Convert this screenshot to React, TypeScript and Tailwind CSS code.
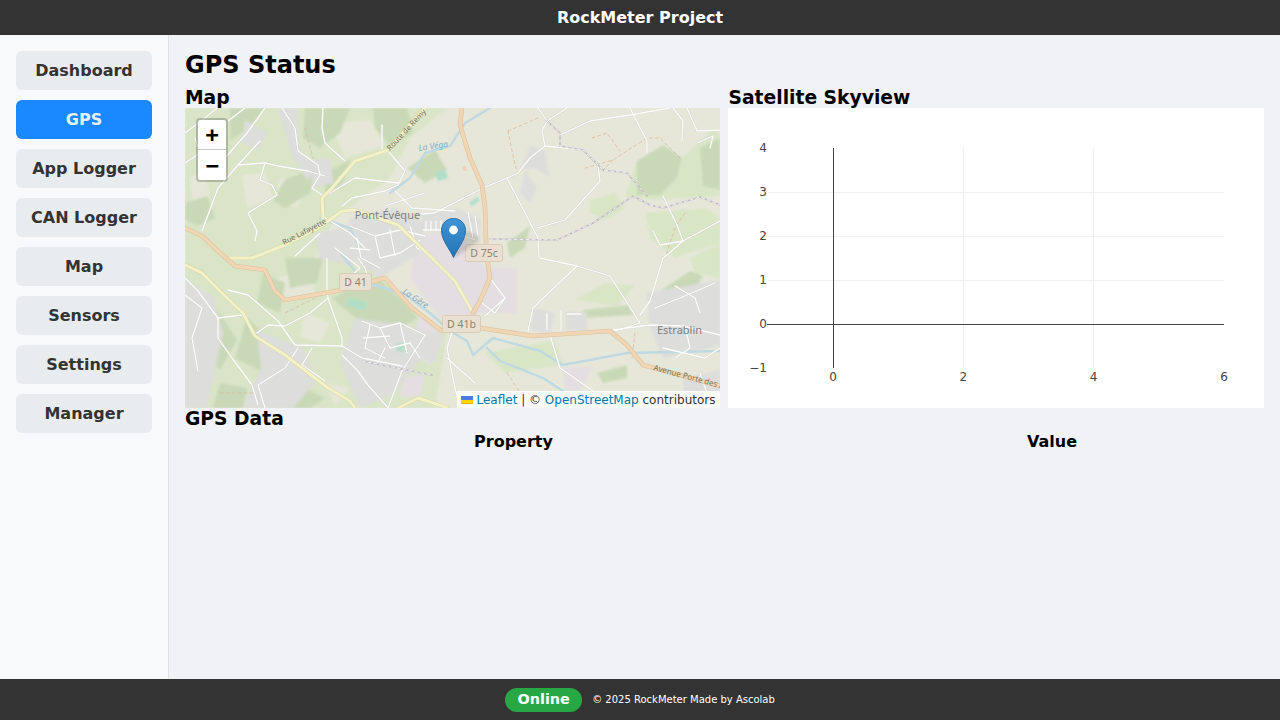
const navItems = ["Dashboard", "GPS", "App Logger", "CAN Logger", "Map", "Sensors", "Settings", "Manager"];

const font = "font-['DejaVu_Sans',sans-serif]";

// map artwork, coordinates relative to the 535x300 tile area
const greenBase = "M0 0L262 0L225 30L205 70L150 110L130 150L190 160L235 205L262 225L250 300L0 300Z";

const forest = [
  "M452 53L478 37L497 50L492 70L475 87L452 87Z",
  "M475 183L505 163L518 168L505 190L492 200Z",
  "M398 202L445 197L448 207L398 210Z",
  "M147 190L170 178L193 170L215 190L233 210L210 222L190 224L167 207Z",
  "M120 0L165 0L155 25L135 40L118 30Z",
  "M45 0L80 0L65 20L45 32Z",
  "M188 0L222 0L228 25L205 38L190 20Z",
  "M222 60L250 42L262 62L240 75Z",
  "M100 72L130 60L125 85L100 100L88 92Z",
  "M0 95L22 88L30 110L12 118L0 112Z",
  "M140 65L165 52L158 75L140 88Z",
  "M0 178L28 195L52 232L35 262L12 240L0 215Z",
  "M62 210L95 240L80 265L50 250Z",
  "M78 165L100 175L95 205L72 195Z",
  "M110 275L140 290L125 300L95 300Z",
  "M35 275L62 280L58 300L28 300Z",
  "M412 265L442 257L442 270L418 275Z",
  "M515 40L535 30L535 82L518 78Z",
  "M322 135L345 118L340 140L325 150Z",
  "M100 150L138 150L132 175L105 180Z",
];

const meadow = [
  "M497 50L530 20L535 30L535 88L470 92L440 88L452 53L475 87L492 70Z",
  "M405 92L430 85L440 100L420 112L405 105Z",
  "M460 105L520 100L535 110L535 135L490 150L465 130Z",
  "M390 192L420 175L450 178L432 198Z",
  "M300 245L370 232L378 257L320 265Z",
  "M505 150L535 135L535 170L510 165Z",
];

const fields = [
  "M57 67L80 65L88 90L62 100Z",
  "M145 15L185 12L200 38L160 50Z",
  "M5 70L20 62L25 90L8 95Z",
  "M95 70L125 75L112 100L92 92Z",
  "M92 170L125 160L130 185L100 195Z",
  "M120 205L145 215L135 235L115 228Z",
  "M140 275L165 280L150 298Z",
];

const urban = [
  "M165 110L210 100L240 115L235 145L195 170L160 145Z",
  "M130 125L172 118L168 158L134 150Z",
  "M0 172L28 188L38 225L22 300L0 300Z",
  "M72 222L118 240L132 272L108 300L58 300L76 260Z",
  "M170 210L225 218L240 245L210 285L175 300L155 255Z",
  "M92 0L112 0L115 42L135 62L122 72L108 50Z",
  "M60 12L82 25L74 42L56 35Z",
  "M125 52L145 50L148 75L128 80Z",
  "M345 38L360 42L365 70L350 60L335 62Z",
  "M350 200L370 205L365 225L345 222Z",
  "M381 204L402 204L402 222L381 222Z",
  "M462 185L535 172L535 238L478 250L465 220Z",
  "M498 270L535 262L535 300L500 300Z",
  "M230 218L258 228L250 255L228 245Z",
  "M340 62L352 80L345 95L335 85Z",
  "M236 106L272 100L296 112L295 128L262 126L238 122Z",
];

const plaza = [
  "M232 126L275 125L300 160L332 160L332 205L292 205L285 220L255 210L225 170Z",
  "M235 205L255 225L245 258L225 240Z",
  "M378 260L408 258L395 283L380 283Z",
  "M220 270L240 265L235 290L215 288Z",
];

const roads = [
  "M97 0L110 20L113 43L133 57L135 67L127 80L137 87",
  "M93 58L123 63L140 68",
  "M53 57L80 55L93 58",
  "M75 33L53 57L33 80L17 123",
  "M43 13L60 0",
  "M80 55L75 72L87 77L92 87L63 105L72 123L70 133",
  "M138 0L137 20L140 35L160 53",
  "M197 17L197 42",
  "M137 90L170 70L213 75",
  "M203 43L220 63L213 77L200 83L167 90L157 98",
  "M210 83L227 100L270 103",
  "M0 25L20 10L32 0",
  "M0 55L15 45L10 30",
  "M142 150L142 183L143 190L125 205L100 218L83 217L72 225",
  "M143 190L157 230L157 238",
  "M43 182L63 187L93 213L110 237L157 238L177 250L217 258",
  "M0 170L13 183L33 210L33 230L47 250L67 277L73 297",
  "M33 210L57 207",
  "M0 187L17 200L7 230L13 263",
  "M113 240L100 260L73 277L80 300",
  "M127 240L117 257L140 273",
  "M157 247L173 263L183 277L203 300",
  "M173 150L180 160L183 170",
  "M240 227L217 263L203 300",
  "M80 0L62 25L40 50",
  "M140 110L165 125L180 140",
  "M135 125L110 148",
  "M150 140L175 160L162 172",
  // town grid round Pont-Eveque
  "M165 118L190 128L215 122L240 128",
  "M172 130L176 150L195 160",
  "M190 128L195 150L215 145L235 132",
  "M205 122L210 148",
  "M225 118L232 140L250 150",
  "M165 140L185 142",
  "M200 98L240 85",
  // comb of streets beside the marker
  "M238 122L262 122L290 132",
  "M241 113L241 122M246 113L246 122M251 113L251 122M256 113L256 122",
  "M283 104L288 130M290 108L293 128",
  // southern town
  "M177 213L195 220L215 215L240 227",
  "M185 217L180 240L200 250",
  "M195 220L205 240L225 235",
  "M215 215L222 245",
  "M178 230L205 228",
  "M200 240L192 256",
  "M225 235L235 250",
  // plaza roads
  "M265 97L298 80L322 70L333 65L345 50L360 38L357 23L362 13L353 0",
  "M382 0L362 13",
  "M322 70L353 130L354 150",
  "M360 38L398 42L413 57L415 73L380 112L352 120",
  "M375 27L405 13L445 7L485 0",
  "M445 0L462 33L462 45",
  "M488 0L498 13L497 33",
  "M502 0L512 23L535 22",
  "M512 35L528 28L525 40",
  "M478 88L492 117L498 133L482 147L478 150L465 193L455 207",
  "M468 123L475 137L498 133L535 113",
  "M355 150L392 158L425 168L455 215L430 223",
  "M392 158L355 193L348 200L343 223",
  "M428 222L465 217L498 218L535 227",
  "M365 227L375 260L408 283",
  "M265 97L250 105L236 106",
  "M305 170L320 190L310 205L297 195",
  "M300 208L320 190",
  "M362 205L362 222M376 202L376 222M382 206L396 206",
  "M490 178L510 190L515 205",
  "M470 200L495 190L530 175",
  "M500 218L505 240L490 250",
  "M478 240L520 250L535 240",
  "M515 265L522 285L512 300",
  "M270 215L262 240L270 280L275 300",
  "M262 250L290 275",
];

const yellowRoads = [
  "M0 157L17 165L40 188L58 205L70 228L100 247L117 260L143 280L165 293L170 300",
  "M240 0L203 42L170 53L147 80L137 90L138 110",
  "M40 150L67 150L100 137L133 120L157 103L170 102L213 117L247 150L270 173L288 205",
  "M213 300L233 290L257 298L262 300",
];

const orangeRoads = [
  "M277 0L275 17L285 50L297 77L300 100L301 133L302 150L305 170L295 193L288 205",
  "M295 220L348 228L425 223L442 237L458 257L535 278",
  "M0 120L17 128L33 143L50 158L80 162L90 183L100 192L157 182L200 170L227 200L257 223L270 222",
];

const rivers = [
  "M205 85L225 70L240 45L265 38L280 15L305 0",
  "M218 185L245 205L265 223L282 233L288 247L308 230L355 243L378 257L442 245L535 243",
  "M302 240L315 253L358 270L378 283",
  "M135 110L165 120L175 140",
  "M155 145L180 175L218 185",
];

const railway = "M305 131L372 132L408 115L448 88L465 97L478 100L515 89L535 97";
const railway2 = "M362 13L375 25L375 38L398 42L418 62L442 65L462 88";
const railway3 = "M177 253L247 267";
const paths = [
  "M323 23L353 10",
  "M323 23L330 57L333 65",
  "M400 60L428 52L462 30L475 30L495 50",
  "M407 30L422 25L435 43",
  "M428 52L418 62",
  "M450 225L447 250",
  "M500 105L490 120L480 150",
  "M130 190L100 205",
  "M35 285L70 285",
  "M322 265L345 300",
  "M120 20L128 50",
];

function MapArt() {
  return (
    <svg viewBox="0 0 535 300" className="block w-full h-full">
      <defs>
        <filter id="area" x="-5%" y="-5%" width="110%" height="110%">
          <feGaussianBlur stdDeviation="1.1" />
        </filter>
        <filter id="soft" x="-5%" y="-5%" width="110%" height="110%">
          <feGaussianBlur stdDeviation="0.35" />
        </filter>
        <filter id="shade" x="-30%" y="-30%" width="160%" height="160%">
          <feGaussianBlur stdDeviation="1.4" />
        </filter>
        <linearGradient id="pin" x1="0" y1="0" x2="0" y2="1">
          <stop offset="0" stopColor="#3f95d6" />
          <stop offset="1" stopColor="#2473b4" />
        </linearGradient>
      </defs>
      <rect width="535" height="300" fill="#e6e7d9" />
      <g filter="url(#area)">
        <path d={greenBase} fill="#d9e5c6" />
        {meadow.map((d) => <path key={d} d={d} fill="#d8e6c6" />)}
        {fields.map((d) => <path key={d} d={d} fill="#e6e7d8" />)}
        {forest.map((d) => <path key={d} d={d} fill="#c9d9b7" />)}
        {plaza.map((d) => <path key={d} d={d} fill="#e4dee2" />)}
        {urban.map((d) => <path key={d} d={d} fill="#dddddb" />)}
        <path d="M284 95l8 -6l3 3l-8 6zM250 65l10 -3l3 8l-10 3z" fill="#addfc8" />
        <path d="M164 190l18 4l-2 8l-18 -4zM212 235l8 1l-1 8l-8 -1z" fill="#addfc8" />
      </g>
      <g filter="url(#soft)" fill="none" strokeLinecap="round" strokeLinejoin="round">
        <path d="M277 58l4 0l1 5l-4 0z" fill="#f0d2c0" />
        {rivers.map((d) => <path key={d} d={d} stroke="#bfd9e2" strokeWidth="2.4" />)}
        {paths.map((d) => <path key={d} d={d} stroke="#d9b899" strokeWidth="0.8" strokeDasharray="3 3" />)}
        {roads.map((d) => <path key={d} d={d} stroke="#d4d4d0" strokeWidth="2.1" />)}
        {roads.map((d) => <path key={d} d={d} stroke="#fdfdfb" strokeWidth="1.3" />)}
        {[railway, railway2, railway3].map((d) => <path key={d} d={d} stroke="#c0bac2" strokeWidth="1.7" />)}
        {[railway, railway2, railway3].map((d) => <path key={d} d={d} stroke="#ffffff" strokeWidth="0.8" strokeDasharray="3 3" />)}
        {yellowRoads.map((d) => <path key={d} d={d} stroke="#d8d7ab" strokeWidth="4.2" />)}
        {yellowRoads.map((d) => <path key={d} d={d} stroke="#f2f1c8" strokeWidth="3" />)}
        {orangeRoads.map((d) => <path key={d} d={d} stroke="#dcc09c" strokeWidth="4.6" />)}
        {orangeRoads.map((d) => <path key={d} d={d} stroke="#f0d6b4" strokeWidth="3.4" />)}
      </g>
      <g className="font-['Noto_Sans',sans-serif]">
        <text x="202.5" y="111" textAnchor="middle" fontSize="11" fill="#808080">Pont-Évêque</text>
        <text x="494.5" y="226" textAnchor="middle" fontSize="11" fill="#808080">Estrablin</text>
        <text transform="translate(99 137) rotate(-27)" fontSize="7.5" fill="#74745f">Rue Lafayette</text>
        <text transform="translate(205 43) rotate(-47)" fontSize="7.5" fill="#74745f">Route de Remy</text>
        <text transform="translate(468 262) rotate(15)" fontSize="8" fill="#74745f">Avenue Porte des A</text>
        <text transform="translate(234 43) rotate(-8)" fontSize="8.5" fontStyle="italic" fill="#86a9c6">La Véga</text>
        <text transform="translate(217 185) rotate(33)" fontSize="8.5" fontStyle="italic" fill="#86a9c6">La Gère</text>
        <rect x="280.5" y="136.5" width="37" height="17" rx="2" fill="#eae0d2" stroke="#d9cbb8" />
        <text x="299" y="148.5" textAnchor="middle" fontSize="10.5" fill="#8f8272">D 75c</text>
        <rect x="154.5" y="165.5" width="32" height="17" rx="2" fill="#eae0d2" stroke="#d9cbb8" />
        <text x="170.5" y="177.5" textAnchor="middle" fontSize="10.5" fill="#8f8272">D 41</text>
        <rect x="257.5" y="207.5" width="38" height="17" rx="2" fill="#eae0d2" stroke="#d9cbb8" />
        <text x="276.5" y="219.5" textAnchor="middle" fontSize="10.5" fill="#8f8272">D 41b</text>
      </g>
      {/* marker shadow + pin */}
      <path d="M269 150L293 134Q297 129 289 126Q281 122 274 126L268 131Z" fill="#000000" fillOpacity="0.13" filter="url(#shade)" />
      <path
        d="M268.5 149.5C265 141 256.5 132.5 256.5 122.5C256.5 115 262 110.5 268.5 110.5C275 110.5 280.5 115 280.5 122.5C280.5 132.5 272 141 268.5 149.5Z"
        fill="url(#pin)"
        stroke="#2a6fa5"
      />
      <circle cx="268.5" cy="122" r="4.4" fill="#ffffff" />
    </svg>
  );
}

function SkyChart() {
  const yTicks = [4, 3, 2, 1, 0, -1];
  const xTicks = [0, 2, 4, 6];
  const yPos = (v: number) => 216.5 - v * 44;
  const xPos = (v: number) => 105 + v * 65.17;
  return (
    <svg viewBox="0 0 536 300" className="block w-full h-full">
      {[1, 2, 3].map((v) => (
        <line key={v} x1="40" x2="496" y1={yPos(v)} y2={yPos(v)} stroke="#eeeeee" />
      ))}
      {[2, 4].map((v) => (
        <line key={v} x1={Math.floor(xPos(v)) + 0.5} x2={Math.floor(xPos(v)) + 0.5} y1="40" y2="260" stroke="#eeeeee" />
      ))}
      <line x1="39" x2="496" y1="216.5" y2="216.5" stroke="#444444" />
      <line x1="105.5" x2="105.5" y1="40" y2="260" stroke="#444444" />
      <g fontSize="12" fill="#444444" className={font}>
        {yTicks.map((v) => (
          <text key={v} x="39" y={yPos(v) + 3.5} textAnchor="end">
            {v < 0 ? `−${-v}` : v}
          </text>
        ))}
        {xTicks.map((v) => (
          <text key={v} x={xPos(v)} y="273" textAnchor="middle">
            {v}
          </text>
        ))}
      </g>
    </svg>
  );
}

export default function App() {
  return (
    <div className={`h-screen flex flex-col bg-[#f0f2f5] ${font}`}>
      <header className="h-[35px] shrink-0 bg-[#333333] flex items-center justify-center text-white font-bold text-base">
        RockMeter Project
      </header>

      <div className="flex flex-1 min-h-0">
        <aside className="w-[169px] shrink-0 bg-[#f8f9fa] border-r border-[#dee2e6] pt-4 px-4 flex flex-col gap-2.5">
          {navItems.map((item) => (
            <button
              key={item}
              className={`h-[39px] rounded-md font-bold text-base flex items-center justify-center ${
                item === "GPS" ? "bg-[#1a88ff] text-[#e9eef5]" : "bg-[#e9ecef] text-[#333333]"
              }`}
            >
              {item}
            </button>
          ))}
        </aside>

        <main className="flex-1 min-w-0 pl-4 pr-4 pt-[14px] text-black">
          <h1 className="text-2xl leading-[30px] font-bold mt-[1px]">GPS Status</h1>

          <div className="flex gap-2 mt-[4px]">
            <section className="w-[535px]">
              <h2 className="text-[18.72px] leading-[24px] font-bold h-[24px] pt-[2px]">Map</h2>
              <div className="relative h-[300px] overflow-hidden">
                <MapArt />
                <div className="absolute left-[11px] top-[10px] w-[32px] h-[64px] rounded border-2 border-black/20 bg-clip-padding bg-white flex flex-col">
                  <div className="h-[30px] flex items-center justify-center border-b border-[#cccccc] text-[22px] font-bold font-['DejaVu_Sans_Mono',monospace]">+</div>
                  <div className="h-[30px] flex items-center justify-center text-[22px] font-bold font-['DejaVu_Sans_Mono',monospace]">−</div>
                </div>
                <div className="absolute right-0 bottom-0 h-[17px] pl-1 pr-[4.5px] bg-white/85 flex items-center gap-1 text-xs text-[#333333]">
                  <svg width="12" height="8" viewBox="0 0 12 8">
                    <rect width="12" height="4" fill="#4C7BE1" />
                    <rect y="4" width="12" height="3" fill="#FFD500" />
                    <rect y="7" width="12" height="1" fill="#E0BC00" />
                  </svg>
                  <span className="whitespace-nowrap">
                    <span className="text-[#0078a8]">Leaflet</span> | © <span className="text-[#0078a8]">OpenStreetMap</span> contributors
                  </span>
                </div>
              </div>
            </section>

            <section className="w-[536px]">
              <h2 className="text-[18.72px] leading-[24px] font-bold h-[24px] pt-[2px] pl-[0.5px]">Satellite Skyview</h2>
              <div className="h-[300px] bg-white">
                <SkyChart />
              </div>
            </section>
          </div>

          <h2 className="text-[18.72px] leading-[22px] font-bold">GPS Data</h2>
          <table className="w-[1079px] table-fixed">
            <thead>
              <tr>
                <th className="w-[657px] h-[22px] text-center text-base font-bold">Property</th>
                <th className="w-[422px] h-[22px] pr-[2px] text-center text-base font-bold">Value</th>
              </tr>
            </thead>
          </table>
        </main>
      </div>

      <footer className="h-[41px] shrink-0 bg-[#333333] flex items-center justify-center gap-2.5 text-white">
        <span className="h-[24px] w-[77px] rounded-full bg-[#28a745] font-bold text-[14.4px] flex items-center justify-center">
          Online
        </span>
        <span className="text-[10px]">© 2025 RockMeter Made by Ascolab</span>
      </footer>
    </div>
  );
}
